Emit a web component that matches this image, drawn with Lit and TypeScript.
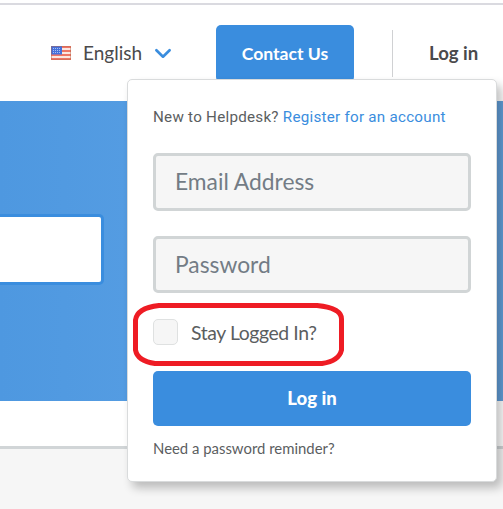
import { LitElement, html, css, svg } from "lit";
import { customElement } from "lit/decorators.js";

@customElement("language-picker")
class LanguagePicker extends LitElement {
  static styles = css`
    :host {
      display: flex;
      align-items: center;
      height: 30px;
      font: 400 19px/28px Lato, sans-serif;
      color: #4a4a4c;
    }
    .flag {
      width: 20px;
      height: 14px;
      margin: -1px 12px 0 0;
    }
    .label {
      width: 59px;
      height: 30px;
      white-space: nowrap;
    }
    .chevron {
      width: 18px;
      height: 12px;
      margin-left: 12px;
    }
  `;

  render() {
    return html`
      <svg class="flag" viewBox="0 0 20 14">
        <rect width="20" height="14" fill="#fbe6e0" />
        ${[0, 4, 8, 12].map((y) => svg`<rect y=${y} width="20" height="2" fill="#ee7566" />`)}
        <rect width="11" height="8.5" fill="#4470dc" />
        ${[2, 4, 6].map((y) =>
          [2, 4, 6, 8].map((x) => svg`<rect x=${x} y=${y} width="1" height="1" fill="#a9bff0" />`)
        )}
        <rect x=".5" y=".5" width="19" height="13" fill="none" stroke="#b5654a" stroke-opacity=".45" />
      </svg>
      <span class="label">English</span>
      <svg class="chevron" viewBox="0 0 18 12">
        <path d="M2.400 2.300 9 8.700l6.600-6.400" fill="none" stroke="#3a8dde" stroke-width="2.700" stroke-linecap="round" stroke-linejoin="round" />
      </svg>
    `;
  }
}

@customElement("login-panel")
class LoginPanel extends LitElement {
  static styles = css`
    :host {
      display: flex;
      flex-direction: column;
      box-sizing: border-box;
      padding: 26px 25px 0;
      background: #fff;
      border: 1px solid #d9dbdc;
      border-radius: 5px;
      box-shadow: 5px 6px 10px rgba(0, 0, 0, 0.24);
      font-family: Lato, sans-serif;
      color: #5b5e5f;
    }
    .intro {
      height: 22px;
      margin-bottom: 25px;
      font: 400 15.2px/22px Roboto, sans-serif;
      letter-spacing: 0.25px;
      white-space: nowrap;
    }
    .intro a {
      color: #3a8dde;
    }
    .field {
      box-sizing: border-box;
      width: 318px;
      height: 57px;
      margin: 0 0 25px;
      padding: 0 19px 2px;
      border: 3px solid #d1d5d6;
      border-radius: 5px;
      background: #f6f6f6;
      font: 400 22.8px/49px Lato, sans-serif;
      outline: 0;
    }
    .field:first-of-type {
      height: 58px;
    }
    .field::placeholder {
      color: #737c85;
      opacity: 1;
    }
    .stay {
      display: flex;
      align-items: center;
      gap: 13px;
      height: 26px;
      margin-top: 1px;
      font-size: 19.4px;
      line-height: 27px;
      letter-spacing: -0.4px;
      white-space: nowrap;
    }
    .stay-text {
      height: 26px;
    }
    .box {
      box-sizing: border-box;
      width: 25px;
      height: 26px;
      border: 1.5px solid #dfe1e1;
      border-radius: 5px;
      background: #f6f6f6;
    }
    .submit {
      width: 318px;
      height: 55px;
      margin: 26px 0 11px;
      padding: 0;
      border: 0;
      border-radius: 5px;
      background: #3a8dde;
      color: #fff;
      font: 900 18.5px/55px Lato, sans-serif;
    }
    .reminder {
      font-size: 14.9px;
      line-height: 22px;
      white-space: nowrap;
    }
  `;

  render() {
    return html`
      <div class="intro">New to Helpdesk? <a>Register for an account</a></div>
      <input class="field" type="email" placeholder="Email Address" />
      <input class="field" type="password" placeholder="Password" />
      <label class="stay"><span class="box"></span><span class="stay-text">Stay Logged In?</span></label>
      <button class="submit">Log in</button>
      <a class="reminder">Need a password reminder?</a>
    `;
  }
}

@customElement("app-root")
class AppRoot extends LitElement {
  static styles = css`
    :host {
      display: block;
      position: relative;
      width: 503px;
      height: 509px;
      overflow: hidden;
      background: #f6f6f6;
      font-family: Lato, sans-serif;
    }
    .header {
      box-sizing: border-box;
      display: flex;
      align-items: center;
      height: 101px;
      padding: 6px 0 0 51px;
      background: linear-gradient(#fff 3px, #dadae0 3px, #dadae0 5px, #fff 5px);
    }
    .contact {
      width: 138px;
      height: 57px;
      margin-left: 44px;
      border-radius: 5px;
      background: #3a8dde;
      color: #fff;
      font-weight: 700;
      font-size: 17.6px;
      line-height: 57px;
      text-align: center;
    }
    .rule {
      width: 1px;
      height: 47px;
      margin: 0 36px 0 38px;
      background: #d0d1d3;
    }
    .login {
      height: 30px;
      font-weight: 700;
      font-size: 18.6px;
      line-height: 28px;
      color: #4a4a4c;
      white-space: nowrap;
    }
    .hero {
      box-sizing: border-box;
      height: 300px;
      padding-top: 113px;
      background: linear-gradient(90deg, #4e98e0, #549ce2 127px, #629fd9);
    }
    .search {
      box-sizing: border-box;
      width: 104px;
      height: 71px;
      border: 3px solid #3a8dde;
      border-left: 0;
      border-radius: 0 5px 5px 0;
      background: #fff;
    }
    .strip {
      height: 45px;
      background: #fff;
      border-bottom: 3px solid #d1d5d7;
    }
    .panel {
      position: absolute;
      left: 127px;
      top: 79px;
      width: 370px;
      height: 403px;
    }
    .marker {
      position: absolute;
      left: 133px;
      top: 303px;
      width: 211px;
      height: 63px;
    }
  `;

  render() {
    return html`
      <div class="header">
        <language-picker></language-picker>
        <div class="contact">Contact Us</div>
        <div class="rule"></div>
        <div class="login">Log in</div>
      </div>
      <div class="hero"><div class="search"></div></div>
      <div class="strip"></div>
      <login-panel class="panel"></login-panel>
      <svg class="marker" viewBox="0 0 211 63">
        <path
          d="M26 2.500H184Q208.500 5 208.500 16V47Q206 58 189 60.500H22Q4.500 58 2.500 47V17Q4 5 26 2.500Z"
          fill="none"
          stroke="#ee1c24"
          stroke-width="5"
        />
      </svg>
    `;
  }
}
